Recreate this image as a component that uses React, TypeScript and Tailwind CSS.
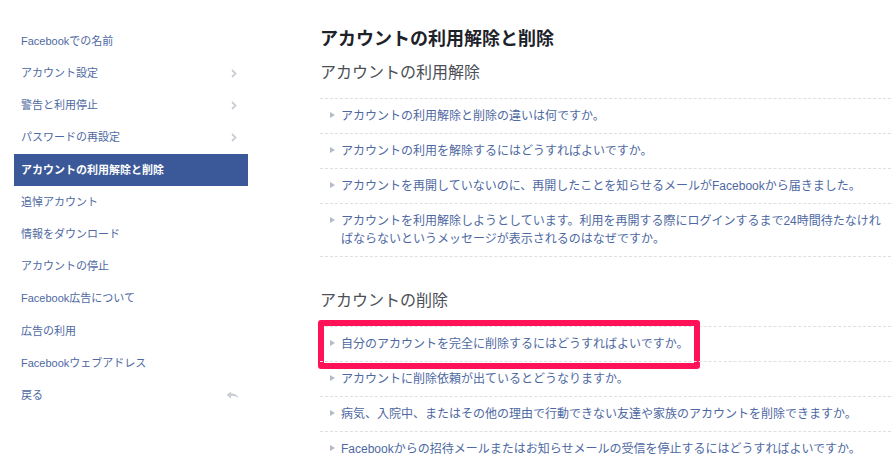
const navItems = [
  { label: 'Facebookでの名前' },
  { label: 'アカウント設定', chevron: true },
  { label: '警告と利用停止', chevron: true },
  { label: 'パスワードの再設定', chevron: true },
  { label: 'アカウントの利用解除と削除', active: true },
  { label: '追悼アカウント' },
  { label: '情報をダウンロード' },
  { label: 'アカウントの停止' },
  { label: 'Facebook広告について' },
  { label: '広告の利用' },
  { label: 'Facebookウェブアドレス' },
  { label: '戻る', back: true },
];

const deactivate = [
  'アカウントの利用解除と削除の違いは何ですか。',
  'アカウントの利用を解除するにはどうすればよいですか。',
  'アカウントを再開していないのに、再開したことを知らせるメールがFacebookから届きました。',
  'アカウントを利用解除しようとしています。利用を再開する際にログインするまで24時間待たなければならないというメッセージが表示されるのはなぜですか。',
];

const deletion = [
  '自分のアカウントを完全に削除するにはどうすればよいですか。',
  'アカウントに削除依頼が出ているとどうなりますか。',
  '病気、入院中、またはその他の理由で行動できない友達や家族のアカウントを削除できますか。',
  'Facebookからの招待メールまたはお知らせメールの受信を停止するにはどうすればよいですか。',
];

const font = { fontFamily: '"Liberation Sans", "Noto Sans CJK JP", sans-serif' };

function Chevron() {
  return (
    <svg width="6" height="9" viewBox="0 0 6 9" className="mr-[11px]">
      <path d="M1 1l3.5 3.5L1 8" fill="none" stroke="#c9cdd4" strokeWidth="1.8" />
    </svg>
  );
}

function BackArrow() {
  return (
    <svg width="13" height="9" viewBox="0 0 13 9" className="mr-[9px]">
      <path d="M0.5 4L5 0.5V2.5C8.5 2.5 11 3.5 12.5 7C10.5 5.3 8.5 5 5 5V7.5Z" fill="#c9cdd4" />
    </svg>
  );
}

function Question({ text, highlight }: { text: string; highlight?: boolean }) {
  return (
    <li className="relative flex border-t border-dashed border-[#dddfe2] py-[8px] pl-[10px] pr-[6px]">
      <span className="mt-[5px] mr-[6px] h-0 w-0 shrink-0 border-y-[3.5px] border-l-[5px] border-y-transparent border-l-[#b4bbc9]" />
      <span className="text-[12px] leading-[18px] text-[#4e69a2]">{text}</span>
      {highlight && (
        <span className="pointer-events-none absolute left-[-2px] top-[-7px] h-[49px] w-[382px] rounded-[3px] border-[6px] border-[#ff1258]" />
      )}
    </li>
  );
}

export default function App() {
  return (
    <div className="h-[466px] w-[891px] overflow-hidden bg-white" style={font}>
      <div className="flex pt-[25px]">
        <nav className="ml-[14px] w-[234px] shrink-0">
          <ul>
            {navItems.map((item) => (
              <li
                key={item.label}
                className={
                  'flex h-[32.2px] items-center justify-between pl-[7px] text-[11px] ' +
                  (item.active ? 'bg-[#3b5998] font-bold text-white' : 'text-[#4e69a2]')
                }
              >
                <span>{item.label}</span>
                {item.chevron && <Chevron />}
                {item.back && <BackArrow />}
              </li>
            ))}
          </ul>
        </nav>

        <main className="ml-[72px] w-[600px] shrink-0">
          <h1 className="mt-[1px] text-[18px] font-bold leading-[26px] text-[#1d2129]">
            アカウントの利用解除と削除
          </h1>
          <h2 className="mt-[10px] text-[16px] leading-[22px] text-[#4b4f56]">アカウントの利用解除</h2>
          <ul className="mt-[14px] w-[571px] border-b border-dashed border-[#dddfe2]">
            {deactivate.map((q) => (
              <Question key={q} text={q} />
            ))}
          </ul>

          <h2 className="mt-[33px] text-[16px] leading-[22px] text-[#4b4f56]">アカウントの削除</h2>
          <ul className="mt-[14px] w-[571px]">
            {deletion.map((q, i) => (
              <Question key={q} text={q} highlight={i === 0} />
            ))}
          </ul>
        </main>
      </div>
    </div>
  );
}
